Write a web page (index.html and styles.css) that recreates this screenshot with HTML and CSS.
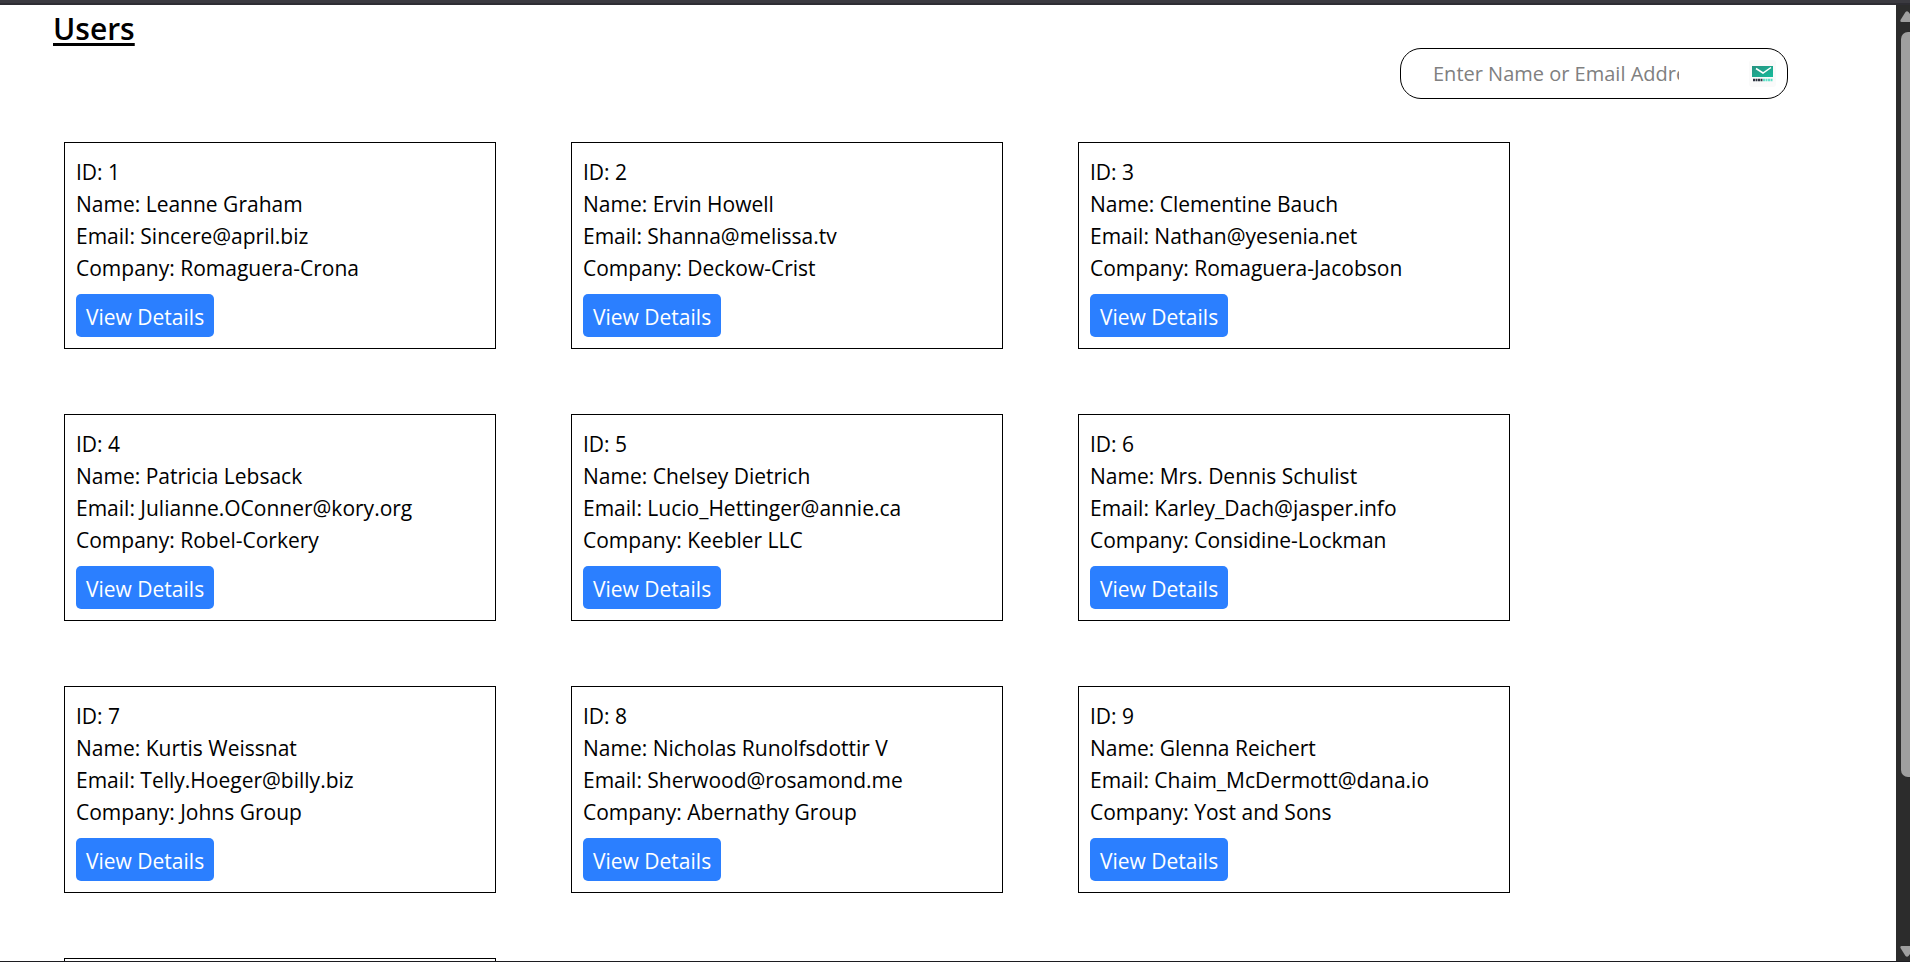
FILE: index.html
```html
<!DOCTYPE html>
<html lang="en">
<head>
<meta charset="utf-8">
<meta name="viewport" content="width=device-width, initial-scale=1">
<title>Users</title>
<link rel="stylesheet" href="styles.css">
</head>
<body>
<div class="topbar"></div>
<div class="viewport">
  <main class="page">
    <h1 class="title">Users</h1>
    <form class="search" role="search">
      <input class="search-input" type="text" aria-label="Search users" placeholder="Enter Name or Email Address">
      <svg class="search-icon" viewBox="0 0 27 27" aria-hidden="true">
        <defs><linearGradient id="mail" x1="0" y1="0" x2="1" y2="1"><stop offset="0" stop-color="#26917f"/><stop offset="1" stop-color="#18bc9c"/></linearGradient></defs>
        <rect width="27" height="27" rx="3" fill="#fafafa"/>
        <rect x="3" y="6" width="21" height="11" fill="url(#mail)"/>
        <path d="M7 8.500l7 4.500 8-5.500" fill="none" stroke="#fff" stroke-width="1.500"/>
        <path d="M4 20h10" stroke="#2d3440" stroke-width="2.400" stroke-dasharray="2 .5"/>
        <path d="M14 20h10" stroke="#5fe0c8" stroke-width="2.400" stroke-dasharray="2 .5"/>
      </svg>
    </form>
    <section class="cards">
      <article class="card"><p>ID: 1</p><p>Name: Leanne Graham</p><p>Email: Sincere@april.biz</p><p>Company: Romaguera-Crona</p><button class="details" type="button">View Details</button></article>
      <article class="card"><p>ID: 2</p><p>Name: Ervin Howell</p><p>Email: Shanna@melissa.tv</p><p>Company: Deckow-Crist</p><button class="details" type="button">View Details</button></article>
      <article class="card"><p>ID: 3</p><p>Name: Clementine Bauch</p><p>Email: Nathan@yesenia.net</p><p>Company: Romaguera-Jacobson</p><button class="details" type="button">View Details</button></article>
      <article class="card"><p>ID: 4</p><p>Name: Patricia Lebsack</p><p>Email: Julianne.OConner@kory.org</p><p>Company: Robel-Corkery</p><button class="details" type="button">View Details</button></article>
      <article class="card"><p>ID: 5</p><p>Name: Chelsey Dietrich</p><p>Email: Lucio_Hettinger@annie.ca</p><p>Company: Keebler LLC</p><button class="details" type="button">View Details</button></article>
      <article class="card"><p>ID: 6</p><p>Name: Mrs. Dennis Schulist</p><p>Email: Karley_Dach@jasper.info</p><p>Company: Considine-Lockman</p><button class="details" type="button">View Details</button></article>
      <article class="card"><p>ID: 7</p><p>Name: Kurtis Weissnat</p><p>Email: Telly.Hoeger@billy.biz</p><p>Company: Johns Group</p><button class="details" type="button">View Details</button></article>
      <article class="card"><p>ID: 8</p><p>Name: Nicholas Runolfsdottir V</p><p>Email: Sherwood@rosamond.me</p><p>Company: Abernathy Group</p><button class="details" type="button">View Details</button></article>
      <article class="card"><p>ID: 9</p><p>Name: Glenna Reichert</p><p>Email: Chaim_McDermott@dana.io</p><p>Company: Yost and Sons</p><button class="details" type="button">View Details</button></article>
      <article class="card"></article>
    </section>
  </main>
  <div class="scrollbar" aria-hidden="true">
    <svg class="arrow" viewBox="0 0 10 11"><path d="M1.500 11Q0 11 .5 9L5.500 1Q7 -.5 8.500 1L10 3V11Z" fill="#9f9f9f"/></svg>
    <div class="track"><div class="thumb"></div></div>
    <svg class="arrow" viewBox="0 0 10 11"><path d="M1.500 0Q0 0 .5 2L5.500 10Q7 11.500 8.500 10L10 8V0Z" fill="#9f9f9f"/></svg>
  </div>
</div>
</body>
</html>
```
FILE: styles.css
```css
* { box-sizing: border-box; }

body {
  margin: 0;
  height: 100vh;
  display: flex;
  flex-direction: column;
  overflow: hidden;
  background: #fff;
  border-bottom: 1px solid #1c1c20;
  color: #000;
  font-family: "Segoe UI", "Open Sans", "Noto Sans", sans-serif;
  font-size: 21px;
  line-height: 32px;
}

.topbar {
  flex: none;
  height: 5px;
  background: #3b3a40;
  border-bottom: 2px solid #2e2d33;
}

.viewport {
  flex: 1;
  min-height: 0;
  display: flex;
}

.page {
  flex: 1;
  min-width: 0;
  overflow: hidden;
}

.title {
  margin: 0 0 0 53px;
  padding-top: 4px;
  font-size: 30px;
  font-weight: 600;
  line-height: 39px;
  text-decoration: underline;
  text-decoration-thickness: 3px;
  text-underline-offset: 3px;
}

.search {
  position: relative;
  width: 388px;
  margin: 0 108px 0 auto;
}

.search-input {
  display: block;
  width: 100%;
  height: 51px;
  padding: 0 108px 0 32px;
  border: 1px solid #000;
  border-radius: 21px;
  background: #fff;
  color: #000;
  font: inherit;
  font-size: 20px;
}

.search-input::placeholder {
  color: #808080;
  opacity: 1;
}

.search-icon {
  position: absolute;
  top: 12px;
  right: 12px;
  width: 27px;
  height: 27px;
}

.cards {
  display: grid;
  grid-template-columns: repeat(auto-fill, 432px);
  gap: 65px 75px;
  padding: 43px 64px;
}

.card {
  min-height: 207px;
  padding: 13px 11px 11px;
  border: 1px solid #000;
}

.card p { margin: 0; }

.details {
  display: block;
  height: 43px;
  margin-top: 10px;
  padding: 3px 10px 0;
  border: 0;
  border-radius: 5px;
  background: #2b7fff;
  color: #fff;
  font: inherit;
}

.scrollbar {
  flex: none;
  width: 14px;
  padding: 6px 0 4px 4px;
  display: flex;
  flex-direction: column;
  gap: 10px;
  background: #2c2c2c;
}

.arrow {
  flex: none;
  width: 10px;
  height: 11px;
}

.track {
  flex: 1;
  padding-left: 1px;
}

.thumb {
  height: 82.4%;
  background: #9f9f9f;
  border-radius: 7px 0 0 7px;
}
```
